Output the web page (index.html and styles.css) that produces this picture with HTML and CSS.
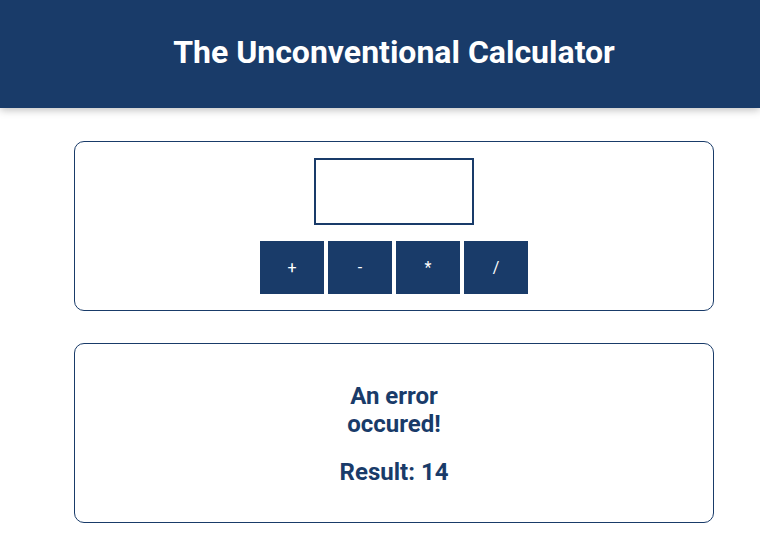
FILE: index.html
```html
<!DOCTYPE html>
<html>
<head>
<meta charset="utf-8">
<link rel="stylesheet" href="styles.css">
</head>
<body>
<header class="top">
  <h1 class="title">The Unconventional Calculator</h1>
</header>
<main class="main">
  <section class="card calc">
    <input class="entry" type="text">
    <div class="ops">
      <button class="op">+</button>
      <button class="op">-</button>
      <button class="op">*</button>
      <button class="op">/</button>
    </div>
  </section>
  <section class="card result">
    <h2 class="msg">An error occured!</h2>
    <h2 class="res">Result: 14</h2>
  </section>
</main>
</body>
</html>
```
FILE: styles.css
```css
* { box-sizing: border-box; }
body {
  margin: 0;
  font-family: Roboto, "Liberation Sans", sans-serif;
  background: #fff;
}
.top {
  background: #193b69;
  height: 108px;
  display: flex;
  align-items: center;
  justify-content: center;
  padding-left: 28px;
  box-shadow: 0 2px 8px rgba(0,0,0,0.26);
}
.title {
  margin: 0;
  color: #fff;
  font-size: 32px;
  font-weight: 700;
  padding-bottom: 4px;
}
.main {
  width: 640px;
  margin: 33px 0 0 74px;
  display: flex;
  flex-direction: column;
  gap: 32px;
}
.card {
  border: 1px solid #193b69;
  border-radius: 10px;
}
.calc {
  padding: 16px;
  display: flex;
  flex-direction: column;
  align-items: center;
  gap: 16px;
}
.entry {
  width: 160px;
  height: 67px;
  border: 2px solid #193b69;
  margin: 0;
  font: inherit;
}
.ops {
  display: flex;
  gap: 4px;
}
.op {
  width: 64px;
  height: 53px;
  border: none;
  background: #193b69;
  color: #fff;
  font-family: Roboto, "Liberation Sans", sans-serif;
  font-size: 16px;
  margin: 0;
  padding: 0;
}
.result {
  height: 180px;
  display: flex;
  flex-direction: column;
  align-items: center;
  padding-top: 38px;
}
.msg, .res {
  margin: 0;
  color: #193b69;
  font-size: 24px;
  font-weight: 700;
  text-align: center;
  line-height: 28px;
}
.msg { width: 110px; }
.res { margin-top: 20px; }
```
